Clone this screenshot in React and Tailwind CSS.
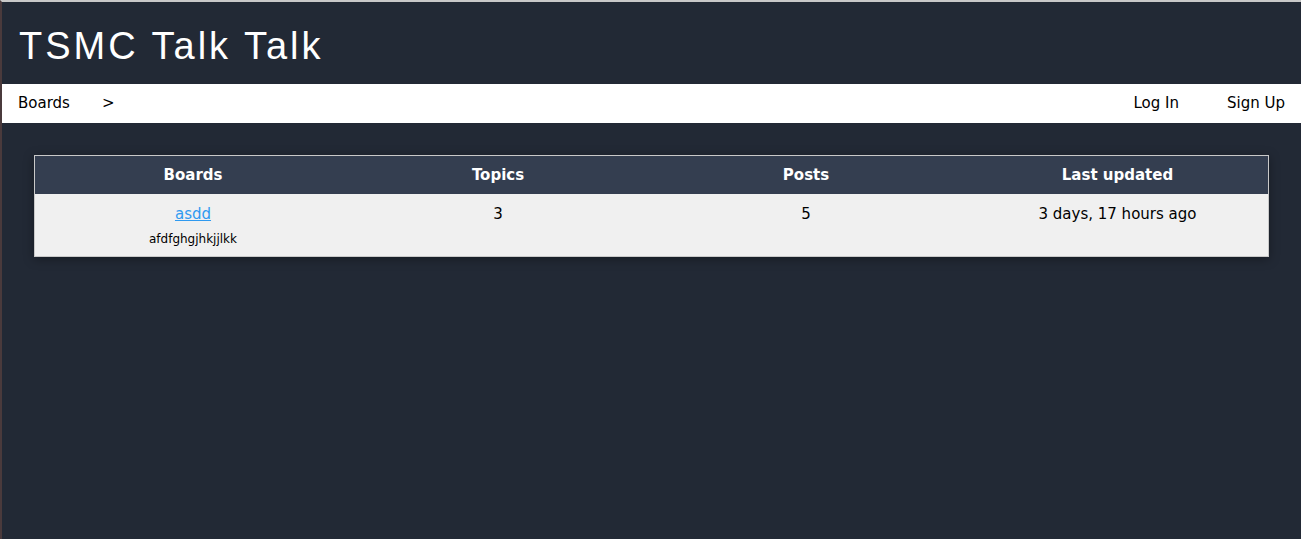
export default function App() {
  const boards = [
    { name: 'asdd', desc: 'afdfghgjhkjjlkk', topics: 3, posts: 5, updated: '3 days, 17 hours ago' },
  ]

  return (
    <div className="h-[539px] overflow-hidden bg-[#222935] border-l-2 border-l-[#4a3a3c] border-t-2 border-t-[#c8c8c8] font-['DejaVu_Sans',sans-serif] text-[15px]">
      <header className="h-[82px] flex items-center px-[17px]">
        <h1 className="text-white text-[38px] tracking-[3px] font-['Liberation_Sans',Arial,sans-serif] pt-[6px]">TSMC Talk Talk</h1>
      </header>
      <nav className="h-[39px] bg-white flex items-center px-4 text-black">
        <a>Boards</a>
        <span className="ml-[32px]">&gt;</span>
        <div className="ml-auto flex gap-[48px]">
          <a>Log In</a>
          <a>Sign Up</a>
        </div>
      </nav>
      <main className="px-[32px] pt-8">
        <div className="border border-[#c9c9c9] shadow-[0_2px_10px_rgba(0,0,0,0.35)]">
          <table className="w-full table-fixed border-collapse">
            <thead>
              <tr className="bg-[#343e50] text-white h-[38px]">
                <th className="font-bold w-[316px]">Boards</th>
                <th className="font-bold w-[294px]">Topics</th>
                <th className="font-bold w-[322px]">Posts</th>
                <th className="font-bold">Last updated</th>
              </tr>
            </thead>
            <tbody>
              {boards.map(b => (
                <tr key={b.name} className="bg-[#f0f0f0] text-black h-[62px] align-top text-center">
                  <td className="pt-[9px]">
                    <a href="#" className="text-[#2f9af0] underline">{b.name}</a>
                    <div className="text-[12px] mt-[4px]">{b.desc}</div>
                  </td>
                  <td className="pt-[9px]">{b.topics}</td>
                  <td className="pt-[9px]">{b.posts}</td>
                  <td className="pt-[9px]">{b.updated}</td>
                </tr>
              ))}
            </tbody>
          </table>
        </div>
      </main>
    </div>
  )
}
